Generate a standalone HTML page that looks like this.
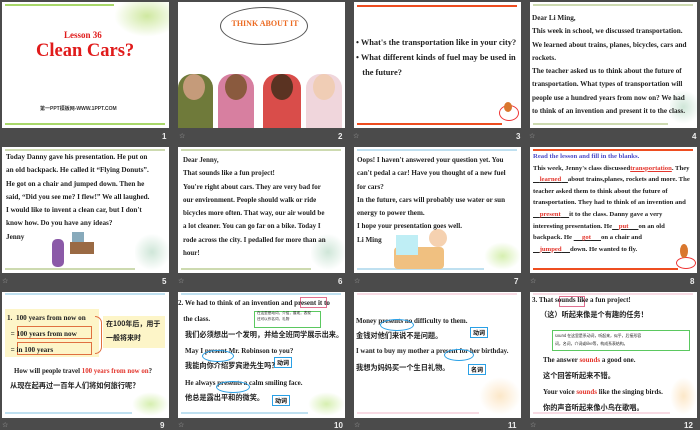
<!DOCTYPE html>
<html><head><meta charset="utf-8"><style>
body{margin:0;width:700px;height:430px;background:#4b4b4b;position:relative;overflow:hidden;font-family:"Liberation Serif","Noto Serif CJK SC",serif;}
.s{position:absolute;width:167px;height:126px;background:#fff;overflow:hidden;}
.n{position:absolute;color:#eee;font:bold 8px "Liberation Sans",sans-serif;}
.st{position:absolute;color:#aaa;font:7px "Liberation Sans",sans-serif;}
.t{position:absolute;font-weight:bold;color:#222;font-size:8px;line-height:13px;white-space:nowrap;}
.hl{position:absolute;height:2px;}
.cn{font-family:"Noto Sans CJK SC",sans-serif;}
.r{color:#e3362d}
.bx{position:absolute;border:1px solid #2aa0e6;font:bold 6px "Noto Sans CJK SC",sans-serif;padding:0 2px;background:#fff;}
</style></head><body>

<!-- slide 1 -->
<div class="s" style="left:2px;top:2px">
<div class="hl" style="left:3px;top:2px;width:110px;background:#a9d86a"></div>
<div class="hl" style="left:3px;top:121px;width:160px;background:#a9d86a"></div>
<div style="position:absolute;left:112px;top:0;width:55px;height:35px;background:radial-gradient(ellipse at 60% 40%,#cfe8a0,#fff 70%)"></div>
<div style="position:absolute;left:62px;top:28px;color:#e01b1b;font-weight:bold;font-size:9px">Lesson 36</div>
<div style="position:absolute;left:34px;top:39px;color:#e01b1b;font-weight:bold;font-size:18.5px">Clean Cars?</div>
<div style="position:absolute;left:38px;top:103px;font:bold 5px 'Liberation Sans','Noto Sans CJK SC',sans-serif;color:#333">第一PPT模板网-WWW.1PPT.COM</div>
</div>
<div class="n" style="left:162px;top:132px">1</div>

<!-- slide 2 -->
<div class="s" style="left:178px;top:2px">
<div style="position:absolute;left:42px;top:5px;width:86px;height:36px;border:1px solid #555;border-radius:50%;background:#fff"></div>
<div style="position:absolute;left:42px;top:17px;width:90px;text-align:center;color:#ec6a21;font-weight:bold;font-size:8px">THINK ABOUT IT</div>
<div style="position:absolute;left:0;top:72px;width:35px;height:54px;background:#6f7a3a;border-radius:14px 14px 0 0"></div>
<div style="position:absolute;left:40px;top:72px;width:36px;height:54px;background:#d77fa0;border-radius:14px 14px 0 0"></div>
<div style="position:absolute;left:85px;top:72px;width:38px;height:54px;background:#d94d4a;border-radius:14px 14px 0 0"></div>
<div style="position:absolute;left:128px;top:72px;width:36px;height:54px;background:#f0d6dc;border-radius:14px 14px 0 0"></div>
<div style="position:absolute;left:5px;top:72px;width:22px;height:26px;background:#c59b7a;border-radius:50%"></div>
<div style="position:absolute;left:47px;top:72px;width:22px;height:26px;background:#8a5a3e;border-radius:50%"></div>
<div style="position:absolute;left:93px;top:72px;width:22px;height:26px;background:#5a3322;border-radius:50%"></div>
<div style="position:absolute;left:135px;top:72px;width:22px;height:26px;background:#f0cdb5;border-radius:50%"></div>
</div>
<div class="st" style="left:179px;top:132px">☆</div><div class="n" style="left:338px;top:132px">2</div>

<!-- slide 3 -->
<div class="s" style="left:354px;top:2px">
<div class="hl" style="left:3px;top:3px;width:160px;background:#ee4d20"></div>
<div class="hl" style="left:3px;top:121px;width:145px;background:#ee4d20"></div>
<div class="t" style="left:2px;top:33px;font-size:8.4px;line-height:15px">• What's the transportation like in your city?<br>• What different kinds of fuel may be used in<br>&nbsp;&nbsp;&nbsp;the future?</div>
<div style="position:absolute;left:145px;top:103px;width:18px;height:14px;border:1px solid #e33;border-radius:50%"></div>
<div style="position:absolute;left:150px;top:100px;width:8px;height:10px;background:#d9772e;border-radius:50%"></div>
</div>
<div class="st" style="left:353px;top:132px">☆</div><div class="n" style="left:516px;top:132px">3</div>

<!-- slide 4 -->
<div class="s" style="left:530px;top:2px">
<div class="hl" style="left:3px;top:2px;width:160px;background:#cddab0"></div>
<div class="hl" style="left:3px;top:121px;width:135px;background:#cddab0"></div>
<div style="position:absolute;left:140px;top:85px;width:27px;height:40px;background:radial-gradient(circle,#cfe6d8,#fff 70%)"></div>
<div class="t" style="left:2px;top:10px;font-size:7.2px;line-height:13.3px">Dear Li Ming,<br>This week in school, we discussed transportation.<br>We learned about trains, planes, bicycles, cars and<br>rockets.<br>The teacher asked us to think about the future of<br>transportation. What types of transportation will<br>people use a hundred years from now on? We had<br>to think of an invention and present it to the class.</div>
</div>
<div class="st" style="left:529px;top:132px">☆</div><div class="n" style="left:692px;top:132px">4</div>

<!-- slide 5 -->
<div class="s" style="left:2px;top:147px">
<div class="hl" style="left:3px;top:2px;width:160px;background:#cddab0"></div>
<div class="hl" style="left:3px;top:121px;width:135px;background:#cddab0"></div>
<div style="position:absolute;left:133px;top:85px;width:34px;height:40px;background:radial-gradient(circle,#cfe6d8,#fff 70%)"></div>
<div style="position:absolute;left:50px;top:92px;width:12px;height:28px;background:#8b5aa8;border-radius:5px"></div>
<div style="position:absolute;left:68px;top:95px;width:24px;height:12px;background:#9a6a44"></div>
<div style="position:absolute;left:70px;top:85px;width:12px;height:10px;background:#8ab"></div>
<div class="t" style="left:4px;top:4px;font-size:7.2px;line-height:13.3px">Today Danny gave his presentation. He put on<br>an old backpack. He called it “Flying Donuts”.<br>He got on a chair and jumped down. Then he<br>said, “Did you see me? I flew!” We all laughed.<br>I would like to invent a clean car, but I don't<br>know how. Do you have any ideas?<br>Jenny</div>
</div>
<div class="st" style="left:2px;top:277px">☆</div><div class="n" style="left:162px;top:277px">5</div>

<!-- slide 6 -->
<div class="s" style="left:178px;top:147px">
<div class="hl" style="left:3px;top:2px;width:160px;background:#cddab0"></div>
<div class="hl" style="left:3px;top:121px;width:135px;background:#cddab0"></div>
<div style="position:absolute;left:133px;top:85px;width:34px;height:40px;background:radial-gradient(circle,#cfe6d8,#fff 70%)"></div>
<div class="t" style="left:5px;top:7px;font-size:7px;line-height:13.3px">Dear Jenny,<br>That sounds like a fun project!<br>You're right about cars. They are very bad for<br>our environment. People should walk or ride<br>bicycles more often. That way, our air would be<br>a lot cleaner. You can go far on a bike. Today I<br>rode across the city. I pedalled for more than an<br>hour!</div>
</div>
<div class="st" style="left:178px;top:277px">☆</div><div class="n" style="left:338px;top:277px">6</div>

<!-- slide 7 -->
<div class="s" style="left:354px;top:147px">
<div class="hl" style="left:3px;top:2px;width:160px;background:#bfe0f0"></div>
<div class="hl" style="left:3px;top:121px;width:160px;background:#bfe0f0"></div>
<div style="position:absolute;left:40px;top:100px;width:50px;height:22px;background:#f0c080;border-radius:4px"></div>
<div style="position:absolute;left:42px;top:88px;width:22px;height:20px;background:#bfeef5"></div>
<div style="position:absolute;left:75px;top:82px;width:18px;height:18px;background:#f5d1b0;border-radius:50%"></div>
<div style="position:absolute;left:130px;top:95px;width:37px;height:28px;background:radial-gradient(ellipse,#d6efb0,#fff 70%)"></div>
<div class="t" style="left:3px;top:7px;font-size:7.1px;line-height:13.3px">Oops! I haven't answered your question yet. You<br>can't pedal a car! Have you thought of a new fuel<br>for cars?<br>In the future, cars will probably use water or sun<br>energy to power them.<br>I hope your presentation goes well.<br>Li Ming</div>
</div>
<div class="st" style="left:354px;top:277px">☆</div><div class="n" style="left:514px;top:277px">7</div>

<!-- slide 8 -->
<div class="s" style="left:530px;top:147px">
<div class="hl" style="left:3px;top:2px;width:160px;background:#ee4d20"></div>
<div class="hl" style="left:3px;top:121px;width:145px;background:#ee4d20"></div>
<div style="position:absolute;left:146px;top:110px;width:18px;height:10px;border:1px solid #e33;border-radius:50%"></div>
<div style="position:absolute;left:150px;top:97px;width:8px;height:14px;background:#d9772e;border-radius:50%"></div>
<div class="t" style="left:3px;top:4px;font-size:6.7px;line-height:11.6px"><span style="color:#4a4ac8">Read the lesson and fill in the blanks.</span><br>This week, Jenny's class discussed<u class="r">transportation</u>. They<br><u>&nbsp;&nbsp;&nbsp;&nbsp;<span class="r">learned</span>&nbsp;&nbsp;&nbsp;&nbsp;</u>about trains,planes, rockets and more. The<br>teacher asked them to think about the future of<br>transportation. They had to think of an invention and<br><u>&nbsp;&nbsp;&nbsp;&nbsp;<span class="r">present</span>&nbsp;&nbsp;&nbsp;&nbsp;&nbsp;</u>it to the class. Danny gave a very<br>interesting presentation. He<u>&nbsp;&nbsp;&nbsp;&nbsp;<span class="r">put</span>&nbsp;&nbsp;&nbsp;&nbsp;&nbsp;&nbsp;</u>on an old<br>backpack. He <u>&nbsp;&nbsp;&nbsp;&nbsp;&nbsp;<span class="r">got</span>&nbsp;&nbsp;&nbsp;&nbsp;&nbsp;&nbsp;</u>on a chair and<br><u>&nbsp;&nbsp;&nbsp;&nbsp;<span class="r">jumped</span>&nbsp;&nbsp;&nbsp;&nbsp;&nbsp;</u>down. He wanted to fly.</div>
</div>
<div class="st" style="left:530px;top:277px">☆</div><div class="n" style="left:690px;top:277px">8</div>

<!-- slide 9 -->
<div class="s" style="left:2px;top:292px">
<div class="hl" style="left:3px;top:1px;width:160px;background:#bfe0f0"></div>
<div class="hl" style="left:3px;top:120px;width:160px;background:#bfe0f0"></div>
<div style="position:absolute;left:3px;top:17px;width:94px;height:48px;background:#fdf5c8"></div>
<div style="position:absolute;left:101px;top:24px;width:62px;height:32px;background:#fdf5c8"></div>
<div style="position:absolute;left:15px;top:34px;width:73px;height:11px;border:1px solid #e07040"></div>
<div style="position:absolute;left:15px;top:50px;width:73px;height:11px;border:1px solid #e07040"></div>
<div style="position:absolute;left:93px;top:24px;width:6px;height:36px;border:1px solid #e07040;border-left:none;border-radius:0 8px 8px 0"></div>
<div class="t" style="left:5px;top:18px;font-size:7.2px;line-height:16px">1. &nbsp;100 years from now on<br>&nbsp;&nbsp;= 100 years from now<br>&nbsp;&nbsp;= in 100 years</div>
<div class="t cn" style="left:104px;top:25px;font-size:7px;line-height:14px">在100年后，用于<br>一般将来时</div>
<div class="t" style="left:12px;top:73px;font-size:6.9px">How will people travel <span class="r">100 years from now on</span>?</div>
<div class="t cn" style="left:8px;top:88px;font-size:7.2px">从现在起再过一百年人们将如何旅行呢？</div>
<div style="position:absolute;left:130px;top:100px;width:37px;height:24px;background:radial-gradient(ellipse,#d6efb0,#fff 70%)"></div>
</div>
<div class="st" style="left:2px;top:421px">☆</div><div class="n" style="left:160px;top:421px">9</div>

<!-- slide 10 -->
<div class="s" style="left:178px;top:292px">
<div class="hl" style="left:3px;top:1px;width:160px;background:#bfe0f0"></div>
<div class="hl" style="left:3px;top:120px;width:160px;background:#bfe0f0"></div>
<div style="position:absolute;left:122px;top:5px;width:25px;height:9px;border:1px solid #e07090"></div>
<div style="position:absolute;left:76px;top:19px;width:65px;height:15px;border:1px solid #5bc860"></div>
<div class="t cn" style="left:79px;top:19px;font-size:3.6px;line-height:6px;font-weight:normal">在这里是动词，介绍，展现，表现<br>还可以作名词，礼物</div>
<div class="t" style="left:0;top:3px;font-size:7px;line-height:16px">2. We had to think of an invention and present it to<br>&nbsp;&nbsp;&nbsp;the class.</div>
<div class="t cn" style="left:7px;top:37px;font-size:7.2px">我们必须想出一个发明，并给全班同学展示出来。</div>
<div class="t" style="left:7px;top:53px;font-size:7px">May I present Mr. Robinson to you?</div>
<div style="position:absolute;left:24px;top:58px;width:30px;height:10px;border:1px solid #2aa0e6;border-radius:50%"></div>
<div class="bx" style="left:96px;top:65px">动词</div>
<div class="t cn" style="left:7px;top:68px;font-size:7.2px">我能向你介绍罗宾逊先生吗？</div>
<div class="t" style="left:7px;top:85px;font-size:7px">He always presents a calm smiling face.</div>
<div style="position:absolute;left:38px;top:89px;width:32px;height:10px;border:1px solid #2aa0e6;border-radius:50%"></div>
<div class="bx" style="left:94px;top:103px">动词</div>
<div class="t cn" style="left:7px;top:100px;font-size:7.2px">他总是露出平和的微笑。</div>
<div style="position:absolute;left:130px;top:100px;width:37px;height:24px;background:radial-gradient(ellipse,#d6efb0,#fff 70%)"></div>
</div>
<div class="st" style="left:178px;top:421px">☆</div><div class="n" style="left:334px;top:421px">10</div>

<!-- slide 11 -->
<div class="s" style="left:354px;top:292px">
<div class="hl" style="left:3px;top:1px;width:160px;background:#f8dbe4"></div>
<div class="hl" style="left:3px;top:120px;width:160px;background:#f8dbe4"></div>
<div class="t" style="left:2px;top:23px;font-size:7px">Money presents no difficulty to them.</div>
<div style="position:absolute;left:26px;top:27px;width:32px;height:10px;border:1px solid #2aa0e6;border-radius:50%"></div>
<div class="bx" style="left:116px;top:35px">动词</div>
<div class="t cn" style="left:2px;top:38px;font-size:7.2px">金钱对他们来说不是问题。</div>
<div class="t" style="left:2px;top:53px;font-size:6.9px">I want to buy my mother a present for her birthday.</div>
<div style="position:absolute;left:90px;top:57px;width:28px;height:10px;border:1px solid #2aa0e6;border-radius:50%"></div>
<div class="bx" style="left:114px;top:72px">名词</div>
<div class="t cn" style="left:2px;top:70px;font-size:7.2px">我想为妈妈买一个生日礼物。</div>
<div style="position:absolute;left:125px;top:85px;width:42px;height:38px;background:radial-gradient(ellipse,#fce7c8,#fff 70%)"></div>
</div>
<div class="st" style="left:354px;top:421px">☆</div><div class="n" style="left:508px;top:421px">11</div>

<!-- slide 12 -->
<div class="s" style="left:530px;top:292px">
<div class="hl" style="left:3px;top:1px;width:160px;background:#f8dbe4"></div>
<div class="hl" style="left:3px;top:120px;width:160px;background:#f8dbe4"></div>
<div style="position:absolute;left:29px;top:4px;width:24px;height:9px;border:1px solid #e07090"></div>
<div style="position:absolute;left:22px;top:38px;width:136px;height:19px;border:1px solid #5bc860"></div>
<div class="t cn" style="left:25px;top:40px;font-size:3.9px;line-height:8px;font-weight:normal">sound 在这里是系动词，听起来，似乎，后接形容<br>词，名词，介词或like等，构成系表结构。</div>
<div class="t" style="left:2px;top:2px;font-size:7px">3. That sounds like a fun project!</div>
<div class="t cn" style="left:10px;top:17px;font-size:7.2px">（这）听起来像是个有趣的任务！</div>
<div class="t" style="left:13px;top:62px;font-size:7px">The answer <span class="r">sounds</span> a good one.</div>
<div class="t cn" style="left:13px;top:78px;font-size:7.2px">这个回答听起来不错。</div>
<div class="t" style="left:13px;top:94px;font-size:7px">Your voice <span class="r">sounds</span> like the singing birds.</div>
<div class="t cn" style="left:13px;top:110px;font-size:7.2px">你的声音听起来像小鸟在歌唱。</div>
<div style="position:absolute;left:140px;top:85px;width:27px;height:38px;background:radial-gradient(ellipse,#fce7c8,#fff 70%)"></div>
</div>
<div class="st" style="left:530px;top:421px">☆</div><div class="n" style="left:684px;top:421px">12</div>

</body></html>
